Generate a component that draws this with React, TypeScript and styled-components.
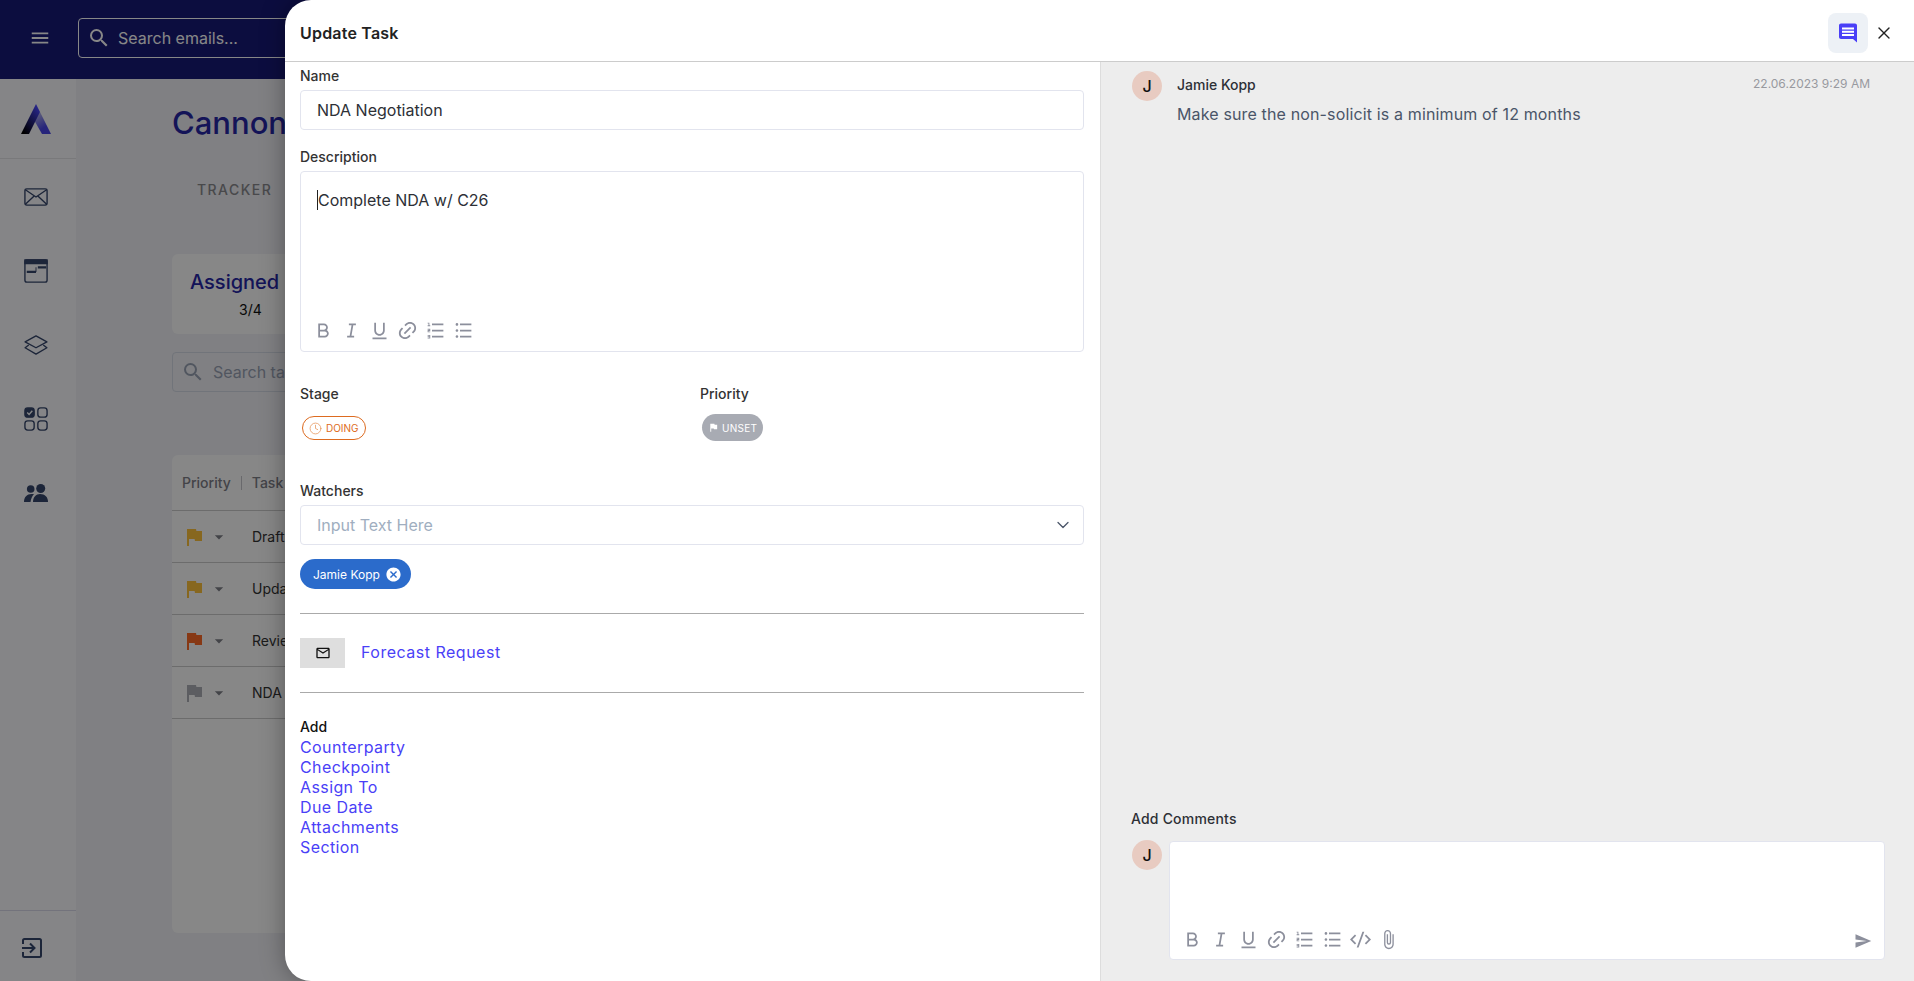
import React from "react";
import styled, { createGlobalStyle } from "styled-components";
import {
  MdMenu,
  MdSearch,
  MdFlag,
  MdArrowDropDown,
  MdCancel,
  MdOutlineMailOutline,
  MdSend,
  MdAttachFile,
} from "react-icons/md";
import {
  RiBold,
  RiItalic,
  RiUnderline,
  RiLink,
  RiListOrdered,
  RiListUnordered,
  RiCodeSSlashLine,
} from "react-icons/ri";
import { LuClock, LuChevronDown, LuX } from "react-icons/lu";

const GlobalStyle = createGlobalStyle`
  html, body {
    margin: 0;
    padding: 0;
    height: 100%;
    overflow: hidden;
    font-family: Inter, "Liberation Sans", sans-serif;
  }
  * {
    box-sizing: border-box;
  }
`;

const Page = styled.div`
  position: relative;
  width: 1914px;
  height: 981px;
  overflow: hidden;
  display: flex;
  flex-direction: column;
  background: #f1f2f7;
`;

const TopBar = styled.header`
  height: 79px;
  flex: none;
  display: flex;
  align-items: center;
  padding-bottom: 3px;
  background: #181a78;
  color: #fff;
  overflow: hidden;
`;

const MenuButton = styled.div`
  width: 78px;
  display: flex;
  justify-content: center;
  font-size: 22px;
  padding-left: 2px;
`;

const TopSearch = styled.div`
  width: 500px;
  flex: none;
  height: 40px;
  display: flex;
  align-items: center;
  gap: 7px;
  padding: 0 8px;
  border: 1px solid #fff;
  border-radius: 4px;
  font-size: 16px;
  color: #fff;
  svg {
    font-size: 24px;
  }
`;

const Body = styled.div`
  flex: 1;
  display: flex;
  min-height: 0;
`;

const Sidebar = styled.nav`
  width: 76px;
  flex: none;
  display: flex;
  flex-direction: column;
  background: #fbfcff;
`;

const LogoRow = styled.div`
  height: 80px;
  display: flex;
  align-items: center;
  justify-content: center;
  padding-right: 4px;
  border-bottom: 1px solid #e4e4e8;
`;

const NavIcons = styled.div`
  flex: 1;
  display: flex;
  flex-direction: column;
  align-items: center;
  gap: 50px;
  padding: 26px 4px 0 0;
  color: #36466c;
`;

const NavIcon = styled.div`
  width: 24px;
  height: 24px;
  display: flex;
  align-items: center;
  justify-content: center;
`;

const SidebarFoot = styled.div`
  height: 71px;
  padding: 27px 0 0 22px;
  border-top: 1px solid #d9d9ea;
  color: #36466c;
`;

const Main = styled.main`
  width: 209px;
  flex: none;
  overflow: hidden;
  padding: 24px 0 0 96px;
  display: flex;
  flex-direction: column;
  white-space: nowrap;
`;

const PageTitle = styled.h1`
  margin: 0;
  font-size: 31px;
  line-height: 40px;
  font-weight: 500;
  color: #2626a6;
`;

const Tabs = styled.div`
  margin: 37px 0 0 25px;
  font-size: 14px;
  line-height: 20px;
  font-weight: 500;
  letter-spacing: 1.45px;
  color: #8a8a8f;
`;

const StatCard = styled.div`
  flex: none;
  margin-top: 54px;
  width: 300px;
  height: 80px;
  padding: 15px 18px;
  background: #fff;
  border-radius: 6px;
`;

const StatTitle = styled.div`
  font-size: 20px;
  line-height: 26px;
  font-weight: 500;
  color: #2626a6;
`;

const StatValue = styled.div`
  margin: 5px 0 0 49px;
  font-size: 14px;
  line-height: 20px;
  color: #111;
`;

const TaskSearch = styled.div`
  flex: none;
  margin-top: 18px;
  width: 400px;
  height: 40px;
  display: flex;
  align-items: center;
  gap: 8px;
  padding: 0 8px;
  border: 1px solid #d6dbe6;
  border-radius: 4px;
  font-size: 16px;
  color: #9aa3b5;
  svg {
    font-size: 24px;
  }
`;

const TaskTable = styled.div`
  flex: none;
  margin-top: 63px;
  width: 600px;
  height: 478px;
  background: #fff;
  border-radius: 6px;
`;

const TableHead = styled.div`
  height: 56px;
  display: flex;
  align-items: center;
  padding-left: 10px;
  border-bottom: 1px solid #ccc;
  font-size: 14px;
  font-weight: 500;
  color: #7f8089;
`;

const HeadDivider = styled.span`
  width: 1px;
  height: 14px;
  margin: 0 10px;
  background: #c6c6cc;
`;

const TableRow = styled.div`
  height: 52px;
  display: flex;
  align-items: center;
  padding-left: 10px;
  border-bottom: 1px solid #ccc;
  font-size: 14px;
  color: #333;
`;

const FlagCell = styled.div<{ $color: string }>`
  display: flex;
  align-items: center;
  width: 70px;
  font-size: 24px;
  color: ${(props) => props.$color};
  svg + svg {
    width: 20px;
    height: 20px;
    margin-left: 3px;
    color: #7f8089;
  }
`;

const Backdrop = styled.div`
  position: absolute;
  inset: 0;
  background: rgba(0, 0, 0, 0.47);
`;

const Drawer = styled.aside`
  position: absolute;
  top: 0;
  bottom: 0;
  left: 285px;
  right: 0;
  display: flex;
  flex-direction: column;
  overflow: hidden;
  background: #fff;
  border-radius: 26px 0 0 26px;
  box-shadow: 0 0 24px rgba(0, 0, 0, 0.35);
`;

const DrawerHead = styled.div`
  height: 62px;
  flex: none;
  display: flex;
  align-items: center;
  padding: 4px 20px 0 15px;
  border-bottom: 1px solid #ccc;
`;

const DrawerTitle = styled.h2`
  flex: 1;
  margin: 0;
  font-size: 16px;
  line-height: 24px;
  font-weight: 600;
  letter-spacing: 0.2px;
  color: #222;
`;

const CommentToggle = styled.div`
  width: 40px;
  height: 40px;
  display: flex;
  align-items: center;
  justify-content: center;
  border-radius: 8px;
  background: #edf1f6;
`;

const CloseButton = styled.div`
  margin-left: 6px;
  display: flex;
  color: #222;
`;

const DrawerBody = styled.div`
  flex: 1;
  display: flex;
  min-height: 0;
`;

const FormColumn = styled.div`
  width: 815px;
  flex: none;
  padding: 4px 16px 0 15px;
  display: flex;
  flex-direction: column;
`;

const Label = styled.label`
  display: block;
  margin-bottom: 4px;
  font-size: 14px;
  line-height: 20px;
  font-weight: 500;
  color: #333;
`;

const Field = styled.div<{ $top?: number }>`
  margin-top: ${(props) => props.$top ?? 0}px;
`;

const TextBox = styled.div<{ $muted?: boolean }>`
  height: 40px;
  display: flex;
  align-items: center;
  justify-content: space-between;
  padding: 0 16px;
  border: 1px solid #e2e4ee;
  border-radius: 4px;
  font-size: 16px;
  color: ${(props) => (props.$muted ? "#a0aec0" : "#2d3036")};
  svg {
    width: 20px;
    height: 20px;
    stroke-width: 1.5;
    margin-right: -6px;
    color: #4a5568;
  }
`;

const Editor = styled.div`
  height: 181px;
  display: flex;
  flex-direction: column;
  justify-content: space-between;
  padding: 16px 16px 10px;
  border: 1px solid #e2e4ee;
  border-radius: 4px;
  font-size: 16px;
  line-height: 24px;
  color: #2d3036;
`;

const Caret = styled.span`
  display: inline-block;
  width: 1px;
  height: 20px;
  vertical-align: -4px;
  background: #222;
`;

const Toolbar = styled.div`
  display: flex;
  align-items: center;
  gap: 7px;
  margin-left: -4px;
  color: #8c8f9c;
  svg {
    width: 21px;
    height: 21px;
    flex: none;
  }
`;

const StatusRow = styled.div`
  margin-top: 32px;
  display: grid;
  grid-template-columns: 400px 1fr;
`;

const StatusCell = styled.div`
  height: 57px;
  display: flex;
  flex-direction: column;
  align-items: flex-start;
`;

const DoingPill = styled.div`
  margin: 8px 0 0 2px;
  height: 24px;
  display: flex;
  align-items: center;
  gap: 4px;
  padding: 0 6px;
  border: 1px solid #dd6b20;
  border-radius: 12px;
  font-size: 10px;
  color: #dd6b20;
  svg {
    font-size: 13px;
    stroke-width: 1.5;
    color: #e89a63;
  }
`;

const UnsetPill = styled.div`
  margin: 6px 0 0 2px;
  height: 27px;
  display: flex;
  align-items: center;
  gap: 3px;
  padding: 0 6px;
  border-radius: 14px;
  background: #a8abb3;
  font-size: 10px;
  letter-spacing: 0.3px;
  color: #fff;
  svg {
    font-size: 11px;
  }
`;

const Chip = styled.div`
  margin-top: 14px;
  width: 111px;
  height: 30px;
  display: flex;
  align-items: center;
  gap: 5px;
  padding-left: 13px;
  border-radius: 15px;
  background: #2b6bcb;
  font-size: 12px;
  color: #fff;
  svg {
    font-size: 17px;
  }
`;

const Divider = styled.hr`
  margin: 24px 0;
  height: 1px;
  border: 0;
  background: #aaa;
`;

const MailRow = styled.div`
  display: flex;
  align-items: center;
  gap: 16px;
`;

const MailBadge = styled.div`
  width: 45px;
  height: 30px;
  display: flex;
  align-items: center;
  justify-content: center;
  background: #dedede;
  color: #111;
  font-size: 16px;
`;

const TextLink = styled.a`
  display: block;
  font-size: 16px;
  line-height: 20.1px;
  letter-spacing: 0.4px;
  color: #4a3ff7;
`;

const MailLink = styled(TextLink)`
  padding-bottom: 2px;
  letter-spacing: 0.5px;
`;

const AddLabel = styled.div`
  font-size: 14px;
  line-height: 20px;
  font-weight: 500;
  color: #111;
`;

const CommentColumn = styled.div`
  flex: 1;
  display: flex;
  flex-direction: column;
  justify-content: space-between;
  padding: 9px 29px 21px 31px;
  background: #ededed;
  border-left: 1px solid #ddd;
`;

const CommentRow = styled.div`
  display: flex;
  gap: 15px;
  padding-right: 15px;
`;

const Avatar = styled.div`
  width: 30px;
  height: 30px;
  flex: none;
  display: flex;
  align-items: center;
  justify-content: center;
  border-radius: 50%;
  background: #e8cbc1;
  font-size: 16px;
  font-weight: 500;
  color: #111;
`;

const CommentBody = styled.div`
  flex: 1;
`;

const CommentMeta = styled.div`
  display: flex;
  align-items: center;
  justify-content: space-between;
  height: 26px;
`;

const Author = styled.span`
  font-size: 14px;
  font-weight: 500;
  color: #2d3036;
`;

const Timestamp = styled.span`
  font-size: 12px;
  color: #98999f;
  margin-top: -1px;
`;

const CommentText = styled.div`
  margin-top: 5px;
  font-size: 16px;
  line-height: 24px;
  letter-spacing: 0.14px;
  color: #4a5568;
`;

const ComposerLabel = styled.div`
  margin: 0 0 11px -1px;
  font-size: 14px;
  line-height: 20px;
  font-weight: 500;
  letter-spacing: 0.2px;
  color: #2d3036;
`;

const ComposerRow = styled.div`
  display: flex;
  gap: 7px;
`;

const ComposerBox = styled.div`
  flex: 1;
  height: 119px;
  display: flex;
  align-items: flex-end;
  justify-content: space-between;
  padding: 0 12px 9px 16px;
  background: #fff;
  border: 1px solid #e2e4ee;
  border-radius: 4px;
  margin-top: 1px;
`;

const MessageIcon = () => (
  <svg width="20" height="20" viewBox="0 0 20 20">
    <path
      d="M1 2.5C1 1.4 1.9.5 3 .5h14c1.1 0 2 .9 2 2v17l-4-3.5H3c-1.1 0-2-.9-2-2z"
      fill="#4a3ff7"
    />
    <path d="M4 4.5h12v2H4zM4 7.8h12v2H4zM4 11.1h12v2H4z" fill="#fff" />
  </svg>
);

const Logo = () => (
  <svg width="30" height="30" viewBox="0 0 30 30">
    <defs>
      <linearGradient id="logoLeft" x1="0" y1="1" x2="0.7" y2="0">
        <stop offset="0.1" stopColor="#000" />
        <stop offset="1" stopColor="#4a47ff" />
      </linearGradient>
      <linearGradient id="logoRight" x1="0" y1="0" x2="0.5" y2="1">
        <stop offset="0.2" stopColor="#a8a8e8" />
        <stop offset="0.8" stopColor="#4a47e8" />
      </linearGradient>
    </defs>
    <path d="M19 8 L30 30 H21 L13 16 Z" fill="url(#logoRight)" />
    <path d="M15 0 L0 30 H8 L19 8 Z" fill="url(#logoLeft)" />
  </svg>
);

const MailIcon = () => (
  <svg width="24" height="18" viewBox="0 0 26 20" preserveAspectRatio="none" fill="none" stroke="currentColor" strokeWidth="1.5">
    <rect x="1" y="1" width="24" height="18" rx="2" />
    <path d="M1.5 2 L13 10 L24.5 2 M1.5 18 L11 9 M24.5 18 L15 9" />
  </svg>
);

const WindowIcon = () => (
  <svg width="24" height="24" viewBox="0 0 26 26" fill="none" stroke="currentColor" strokeWidth="1.5">
    <rect x="1" y="1" width="24" height="24" rx="2" />
    <path d="M1 1h24v4H1z" fill="currentColor" />
    <path d="M15 9h9M3 14h10" strokeWidth="2.4" />
    <path d="M13 9v5" strokeWidth="1" />
  </svg>
);

const LayersIcon = () => (
  <svg width="24" height="20" viewBox="0 0 26 22" fill="none" stroke="currentColor" strokeWidth="1.5" strokeLinejoin="round">
    <path d="M13 1 L25 7.500 L13 14 L1 7.500 Z" />
    <path d="M5 11 L1 14 L13 21 L25 14 L21 11" />
  </svg>
);

const TasksIcon = () => (
  <svg width="24" height="24" viewBox="0 0 26 26" fill="none" stroke="currentColor" strokeWidth="1.5">
    <rect x="1" y="1" width="10" height="10" rx="3" fill="currentColor" />
    <path d="M3.500 6 L5.500 8 L9 4" stroke="#fff" />
    <rect x="15" y="1" width="10" height="10" rx="3" />
    <rect x="1" y="15" width="10" height="10" rx="3" />
    <rect x="15" y="15" width="10" height="10" rx="3" />
  </svg>
);

const PeopleIcon = () => (
  <svg width="24" height="18" viewBox="0 0 24 18" fill="currentColor">
    <circle cx="6.700" cy="5" r="3.800" />
    <circle cx="16.700" cy="4.500" r="4.500" />
    <path d="M0 18C0 13 3 10 7.500 10H10C8 12 7 15 6.500 18Z" />
    <path d="M9 18C9 13 12 10 16 10C21 10 24 13 24 18Z" />
  </svg>
);

const ExitIcon = () => (
  <svg width="20" height="20" viewBox="0 0 20 20" fill="none" stroke="currentColor" strokeWidth="2">
    <path d="M1 6V2.500C1 1.700 1.700 1 2.500 1h15c.8 0 1.500.7 1.500 1.500v15c0 .8-.7 1.500-1.500 1.500h-15C1.700 19 1 18.300 1 17.500V14" />
    <path d="M0 10h12M8 5.500l4.500 4.500L8 14.500" />
  </svg>
);

const tasks = [
  { name: "Draft Agreement", color: "#ffc23c" },
  { name: "Update Schedule", color: "#ffc23c" },
  { name: "Review Contract", color: "#ff6a26" },
  { name: "NDA Negotiation", color: "#aeb0b8" },
];

const addLinks = ["Counterparty", "Checkpoint", "Assign To", "Due Date", "Attachments", "Section"];

const App: React.FC = () => {
  return (
    <Page>
      <GlobalStyle />
      <TopBar>
        <MenuButton>
          <MdMenu />
        </MenuButton>
        <TopSearch>
          <MdSearch />
          <span>Search emails...</span>
        </TopSearch>
      </TopBar>
      <Body>
        <Sidebar>
          <LogoRow>
            <Logo />
          </LogoRow>
          <NavIcons>
            <NavIcon>
              <MailIcon />
            </NavIcon>
            <NavIcon>
              <WindowIcon />
            </NavIcon>
            <NavIcon>
              <LayersIcon />
            </NavIcon>
            <NavIcon>
              <TasksIcon />
            </NavIcon>
            <NavIcon>
              <PeopleIcon />
            </NavIcon>
          </NavIcons>
          <SidebarFoot>
            <ExitIcon />
          </SidebarFoot>
        </Sidebar>
        <Main>
          <PageTitle>Cannon</PageTitle>
          <Tabs>TRACKER</Tabs>
          <StatCard>
            <StatTitle>Assigned</StatTitle>
            <StatValue>3/4</StatValue>
          </StatCard>
          <TaskSearch>
            <MdSearch />
            <span>Search tasks</span>
          </TaskSearch>
          <TaskTable>
            <TableHead>
              Priority
              <HeadDivider />
              Task
            </TableHead>
            {tasks.map((task) => (
              <TableRow key={task.name}>
                <FlagCell $color={task.color}>
                  <MdFlag />
                  <MdArrowDropDown />
                </FlagCell>
                {task.name}
              </TableRow>
            ))}
          </TaskTable>
        </Main>
      </Body>
      <Backdrop />
      <Drawer>
        <DrawerHead>
          <DrawerTitle>Update Task</DrawerTitle>
          <CommentToggle>
            <MessageIcon />
          </CommentToggle>
          <CloseButton>
            <LuX size={20} strokeWidth={1.6} />
          </CloseButton>
        </DrawerHead>
        <DrawerBody>
          <FormColumn>
            <Field>
              <Label>Name</Label>
              <TextBox>NDA Negotiation</TextBox>
            </Field>
            <Field $top={17}>
              <Label>Description</Label>
              <Editor>
                <div>
                  <Caret />
                  Complete NDA w/ C26
                </div>
                <Toolbar>
                  <RiBold />
                  <RiItalic />
                  <RiUnderline />
                  <RiLink />
                  <RiListOrdered />
                  <RiListUnordered />
                </Toolbar>
              </Editor>
            </Field>
            <StatusRow>
              <StatusCell>
                <Label>Stage</Label>
                <DoingPill>
                  <LuClock />
                  DOING
                </DoingPill>
              </StatusCell>
              <StatusCell>
                <Label>Priority</Label>
                <UnsetPill>
                  <MdFlag />
                  UNSET
                </UnsetPill>
              </StatusCell>
            </StatusRow>
            <Field $top={40}>
              <Label>Watchers</Label>
              <TextBox $muted>
                Input Text Here
                <LuChevronDown />
              </TextBox>
            </Field>
            <Chip>
              Jamie Kopp
              <MdCancel />
            </Chip>
            <Divider />
            <MailRow>
              <MailBadge>
                <MdOutlineMailOutline />
              </MailBadge>
              <MailLink>Forecast Request</MailLink>
            </MailRow>
            <Divider />
            <AddLabel>Add</AddLabel>
            {addLinks.map((link) => (
              <TextLink key={link}>{link}</TextLink>
            ))}
          </FormColumn>
          <CommentColumn>
            <CommentRow>
              <Avatar>J</Avatar>
              <CommentBody>
                <CommentMeta>
                  <Author>Jamie Kopp</Author>
                  <Timestamp>22.06.2023 9:29 AM</Timestamp>
                </CommentMeta>
                <CommentText>Make sure the non-solicit is a minimum of 12 months</CommentText>
              </CommentBody>
            </CommentRow>
            <div>
              <ComposerLabel>Add Comments</ComposerLabel>
              <ComposerRow>
                <Avatar>J</Avatar>
                <ComposerBox>
                  <Toolbar>
                    <RiBold />
                    <RiItalic />
                    <RiUnderline />
                    <RiLink />
                    <RiListOrdered />
                    <RiListUnordered />
                    <RiCodeSSlashLine />
                    <MdAttachFile />
                  </Toolbar>
                  <MdSend size={18} color="#8c8f9c" />
                </ComposerBox>
              </ComposerRow>
            </div>
          </CommentColumn>
        </DrawerBody>
      </Drawer>
    </Page>
  );
};

export default App;
